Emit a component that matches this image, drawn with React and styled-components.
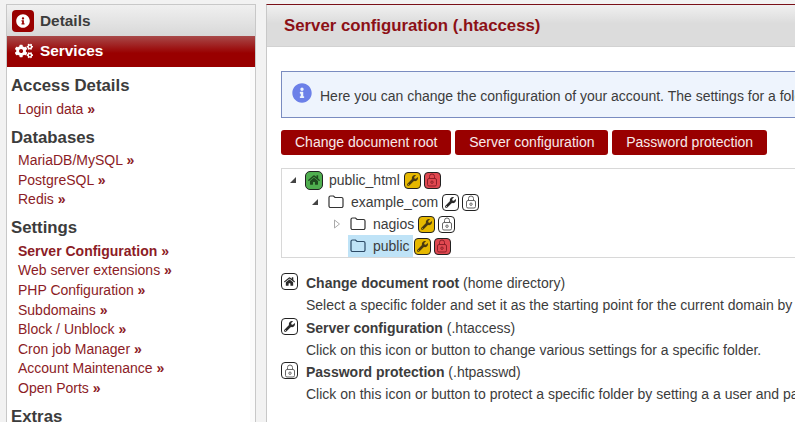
import React from "react";
import styled, { createGlobalStyle } from "styled-components";
import { FaInfoCircle, FaCogs, FaHome, FaWrench } from "react-icons/fa";

const Global = createGlobalStyle`
  html, body { margin: 0; padding: 0; width: 795px; height: 422px; overflow: hidden; background: #f2f2f2; }
  body { font-family: "Liberation Sans", Arial, sans-serif; color: #3c3c3c; }
  * { box-sizing: border-box; }
`;
const Page = styled.div`
  display: flex; align-items: flex-start; width: 795px; height: 422px; overflow: hidden; padding: 4px 0 0 6px; gap: 10px;
`;
const Sidebar = styled.aside`
  flex: none; width: 250px; height: 430px; background: #fff; border: 1px solid #c8c8c8; border-bottom: 0;
`;
const NavHead = styled.div`
  display: flex; align-items: center; height: 31px; padding: 0 0 ${p => p.$active ? 1 : 0}px ${p => p.$active ? 8 : 5}px;
  gap: ${p => p.$active ? 7 : 6}px;
  font-size: 15.4px; font-weight: 700;
  color: ${p => p.$active ? "#fff" : "#3c3c3c"};
  background: ${p => p.$active ? "linear-gradient(#a84a4a 0, #990000 55%, #990000 100%)" : "linear-gradient(#f0f0f0, #d8d8d8)"};
`;
const IconTile = styled.span`
  display: flex; align-items: center; justify-content: center; width: 22px; height: 22px; border-radius: 4px; background: #990000; color: #fff;
`;
const NavBody = styled.div`
  padding: 9px 0 0 4px; height: 368px; border-right: 5px solid #fbfbfb;
`;
const Section = styled.h3`
  margin: 0; font-size: 16.8px; line-height: 20px; font-weight: 700; color: #3c3c3c;
`;
const LinkList = styled.ul`
  list-style: none; margin: 3.5px 0 8.5px; padding: 0 0 0 7px;
`;
const LinkItem = styled.li`
  font-size: 14px; line-height: 19.6px; color: #8c1c26; font-weight: ${p => p.$current ? 700 : 400};
  b { font-weight: 700; }
`;
const Main = styled.main`
  flex: none; width: 540px; height: 430px; background: #fff; border-left: 1px solid #c8c8c8; border-top: 1px solid #7a1018;
`;
const Title = styled.div`
  height: 42px; padding-left: 17px; display: flex; align-items: center;
  font-size: 16.8px; font-weight: 700; color: #8c1016;
  background: linear-gradient(#f0f0f0, #dcdcdc 45%, #dcdcdc);
  border-bottom: 1px solid #d2d2d2;
`;
const Content = styled.div`
  padding: 24px 0 0 14px;
`;
const Notice = styled.div`
  display: flex; align-items: flex-start; width: 530px; height: 47px; padding: 11px 0 0 10px; white-space: nowrap; overflow: hidden;
  background: #eef4fd; border: 1px solid #7a8cc0; border-right: 0; font-size: 14px; color: #3c3c3c;
`;
const NoticeIcon = styled.span`
  flex: none; display: flex; width: 20px; height: 20px; margin-right: 8px; color: #6c80e8;
`;
const NoticeText = styled.span`
  padding-top: 5px;
`;
const Buttons = styled.div`
  display: flex; gap: 3.75px; margin-top: 12px;
`;
const Button = styled.button`
  height: 25px; padding: 0 14px 2px; border: 0; border-radius: 3px; background: #990000; color: #f8eaea;
  font: 14px "Liberation Sans", Arial, sans-serif;
`;
const Tree = styled.div`
  width: 530px; height: 90px; margin-top: 13px; border: 1px solid #d8d8d8; border-right: 0;
`;
const TreeRow = styled.div`
  display: flex; align-items: center; height: 22px; padding-left: ${p => 3 + p.$level * 22}px; font-size: 14px; color: #3c3c3c;
`;
const Arrow = styled.span`
  flex: none; width: 16px; margin-right: 3px; display: flex; justify-content: center;
`;
const FolderBox = styled.span`
  display: flex; align-items: center; height: 22px; padding: 0 3px 0 2px; margin-right: 1px;
  background: ${p => p.$sel ? "#bfe3f7" : "transparent"};
`;
const Slot = styled.span`
  flex: none; display: flex; justify-content: center; width: 16px; margin-right: 7px;
`;
const Tile = styled.span`
  flex: none; display: inline-flex; align-items: center; justify-content: center; width: 17px; height: 17px; margin-right: 3px; border-radius: 4px;
  border: 1px solid #222; background: ${p => p.$bg || "#fff"}; color: ${p => p.$fg || "#2a2a2a"};
`;
const RootTile = styled(Tile)`
  width: 18px; height: 19px; margin: 0; border-radius: 5px;
`;
const Help = styled.div`
  margin-top: 14px; width: 530px;
`;
const HelpBlock = styled.div`
  display: grid; grid-template-columns: 17px 1fr; column-gap: 8px; font-size: 14px; line-height: 22.25px; white-space: nowrap;
  b { font-weight: 700; }
`;
const HelpIcon = styled.span`
  grid-row: 1 / span 2; align-self: start; display: flex; padding-top: 1px;
`;
const HelpText = styled.div`
  grid-column: 2; overflow: hidden;
`;

const Folder = ({ c = "#333" }) => (
  <svg width="16" height="14" viewBox="0 0 16 14" fill="none" stroke={c} strokeWidth="1.2"><path d="M1 2.500a1.500 1.500 0 0 1 1.500-1.500h3l1.500 1.500h6.500A1.500 1.500 0 0 1 15 4v7a1.500 1.500 0 0 1-1.500 1.500h-11A1.500 1.500 0 0 1 1 11z" /></svg>
);
const Tri = ({ open }) => open ? (
  <svg width="8" height="8" viewBox="0 0 8 8"><path d="M7 1v6H1z" fill="#444" /></svg>
) : (
  <svg width="6" height="10" viewBox="0 0 6 10"><path d="M.5 1l5 4-5 4z" fill="#fff" stroke="#aaa" /></svg>
);
const Lock = () => (
  <svg width="12" height="14" viewBox="0 0 12 14" fill="none" stroke="currentColor" strokeWidth="1"><rect x="1.500" y="5.500" width="9" height="7.500" rx="1.500" /><path d="M3.500 5.500V3.500a2.500 2.500 0 0 1 5 0v2" /><circle cx="6" cy="9.200" r="1.200" /></svg>
);

const groups = [
  ["Access Details", ["Login data"]],
  ["Databases", ["MariaDB/MySQL", "PostgreSQL", "Redis"]],
  ["Settings", ["Server Configuration", "Web server extensions", "PHP Configuration", "Subdomains", "Block / Unblock", "Cron job Manager", "Account Maintenance", "Open Ports"]],
  ["Extras", []],
];

const YELLOW = { $bg: "#e6b800", $fg: "#4a3a10" };
const RED = { $bg: "#e04850", $fg: "#8c1f28" };

export default function App() {
  return (
    <Page>
      <Global />
      <Sidebar>
        <NavHead><IconTile><FaInfoCircle size={14} /></IconTile>Details</NavHead>
        <NavHead $active><FaCogs size={18} />Services</NavHead>
        <NavBody>
          {groups.map(([h, links]) => (
            <React.Fragment key={h}>
              <Section>{h}</Section>
              <LinkList>
                {links.map(l => <LinkItem key={l} $current={l === "Server Configuration"}>{l} <b>»</b></LinkItem>)}
              </LinkList>
            </React.Fragment>
          ))}
        </NavBody>
      </Sidebar>
      <Main>
        <Title>Server configuration (.htaccess)</Title>
        <Content>
          <Notice><NoticeIcon><FaInfoCircle size={20} /></NoticeIcon><NoticeText>Here you can change the configuration of your account. The settings for a folder apply to all subfolders.</NoticeText></Notice>
          <Buttons>
            <Button>Change document root</Button>
            <Button>Server configuration</Button>
            <Button>Password protection</Button>
          </Buttons>
          <Tree>
            <TreeRow $level={0}><Arrow><Tri open /></Arrow><FolderBox><Slot><RootTile $bg="#4fae4f" $fg="#1f4a1f"><FaHome size={12} /></RootTile></Slot>public_html</FolderBox><Tile {...YELLOW}><FaWrench size={11} /></Tile><Tile {...RED}><Lock /></Tile></TreeRow>
            <TreeRow $level={1}><Arrow><Tri open /></Arrow><FolderBox><Slot><Folder /></Slot>example_com</FolderBox><Tile><FaWrench size={11} /></Tile><Tile $fg="#666"><Lock /></Tile></TreeRow>
            <TreeRow $level={2}><Arrow><Tri /></Arrow><FolderBox><Slot><Folder /></Slot>nagios</FolderBox><Tile {...YELLOW}><FaWrench size={11} /></Tile><Tile $fg="#666"><Lock /></Tile></TreeRow>
            <TreeRow $level={2}><Arrow /><FolderBox $sel><Slot><Folder c="#2c4a66" /></Slot>public</FolderBox><Tile {...YELLOW}><FaWrench size={11} /></Tile><Tile {...RED}><Lock /></Tile></TreeRow>
          </Tree>
          <Help>
            <HelpBlock><HelpIcon><Tile><FaHome size={11} /></Tile></HelpIcon><HelpText><b>Change document root</b> (home directory)</HelpText><HelpText>Select a specific folder and set it as the starting point for the current domain by clicking this icon.</HelpText></HelpBlock>
            <HelpBlock><HelpIcon><Tile><FaWrench size={11} /></Tile></HelpIcon><HelpText><b>Server configuration</b> (.htaccess)</HelpText><HelpText>Click on this icon or button to change various settings for a specific folder.</HelpText></HelpBlock>
            <HelpBlock><HelpIcon><Tile $fg="#666"><Lock /></Tile></HelpIcon><HelpText><b>Password protection</b> (.htpasswd)</HelpText><HelpText>Click on this icon or button to protect a specific folder by setting a a user and password.</HelpText></HelpBlock>
          </Help>
        </Content>
      </Main>
    </Page>
  );
}
